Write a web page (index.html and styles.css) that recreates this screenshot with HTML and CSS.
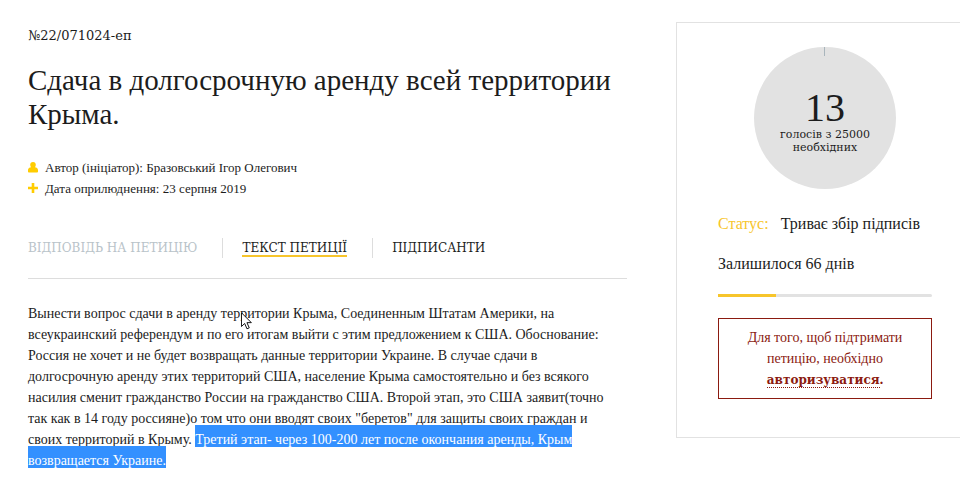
FILE: index.html
```html
<!DOCTYPE html>
<html lang="uk">

<head>
    <meta charset="UTF-8">
    <meta name="viewport" content="width=device-width, initial-scale=1.0">
    <title>Петиція №22/071024-еп</title>
    <link rel="stylesheet" href="styles.css">
</head>

<body>
    <div class="page">
        <main class="petition">
            <div class="number">№22/071024-еп</div>
            <h1>Сдача в долгосрочную аренду всей территории Крыма.</h1>

            <div class="meta">
                <div class="meta-row">
                    <svg class="icon" viewBox="0 0 10 14">
                        <path d="M5 1C6.9 1 7.8 2.2 7.8 3.7C7.8 4.8 7.4 5.7 6.9 6.3C8.9 6.5 10 7.6 10 9.2V10.5C10 11.2 9.5 11.6 8.8 11.6H1.2C.5 11.6 0 11.2 0 10.5V9.2C0 7.6 1.1 6.5 3.1 6.3C2.6 5.7 2.2 4.8 2.2 3.7C2.2 2.2 3.1 1 5 1Z"/>
                    </svg>
                    <span>Автор (ініціатор): Бразовський Ігор Олегович</span>
                </div>
                <div class="meta-row">
                    <svg class="icon" viewBox="0 0 10 14">
                        <path d="M3.7 1H6.3V4.7H10V7.3H6.3V11H3.7V7.3H0V4.7H3.7Z"/>
                    </svg>
                    <span>Дата оприлюднення: 23 серпня 2019</span>
                </div>
            </div>

            <nav class="tabs">
                <span class="tab disabled">ВІДПОВІДЬ НА ПЕТИЦІЮ</span>
                <a class="tab active" href="#text"><span>ТЕКСТ ПЕТИЦІЇ</span></a>
                <a class="tab" href="#signers">ПІДПИСАНТИ</a>
            </nav>

            <p class="text" id="text">
                Вынести вопрос сдачи в аренду территории Крыма, Соединенным Штатам Америки, на<br>
                всеукраинский референдум и по его итогам выйти с этим предложением к США. Обоснование:<br>
                Россия не хочет и не будет возвращать данные территории Украине. В случае сдачи в<br>
                долгосрочную аренду этих территорий США, население Крыма самостоятельно и без всякого<br>
                насилия сменит гражданство России на гражданство США. Второй этап, это США заявит(точно<br>
                так как в 14 году россияне)о том что они вводят своих "беретов" для защиты своих граждан и<br>
                своих территорий в Крыму. <mark>Третий этап- через 100-200 лет после окончания аренды, Крым<br>
                возвращается Украине.</mark>
            </p>
        </main>

        <aside class="card">
            <div class="votes">
                <div class="count">13</div>
                <div>голосів з 25000<br>необхідних</div>
            </div>
            <div class="status"><span class="label">Статус:</span> <span>Триває збір підписів</span></div>
            <div class="days">Залишилося 66 днів</div>
            <div class="bar"><div class="bar-fill" style="width: 27%"></div></div>
            <div class="notice">
                Для того, щоб підтримати<br>петицію, необхідно<br><a href="#login">авторизуватися</a><b>.</b>
            </div>
        </aside>
    </div>

    <svg class="cursor" viewBox="0 0 12 19">
        <path d="M.5 .5V15.5L4 12.2L6.5 18L9 17L6.5 11.3H11.3Z"/>
    </svg>
</body>

</html>
```

FILE: styles.css
```css
* {
    box-sizing: border-box;
}

body {
    margin: 0;
    background: #fff;
    color: #1c1c1c;
    font-family: "Liberation Serif", serif;
    font-size: 14px;
    line-height: 21px;
}

.page {
    display: grid;
    grid-template-columns: minmax(0, 1fr) 284px;
    column-gap: 49px;
    align-items: start;
    padding: 22px 0 18px 28px;
}

.petition {
    padding-top: 3px;
}

.number {
    font-family: "DejaVu Serif", serif;
    font-size: 13px;
}

h1 {
    margin: 17px 0 26px;
    font-size: 29px;
    font-weight: normal;
    line-height: 34px;
}

.meta {
    font-size: 13px;
}

.meta-row {
    display: flex;
    align-items: center;
    gap: 7px;
}

.icon {
    width: 10px;
    height: 14px;
    fill: #fc0;
}

.tabs {
    display: flex;
    align-items: center;
    padding: 39px 0 20px;
    border-bottom: 1px solid #ddd;
    font-family: "DejaVu Serif", serif;
    font-size: 12px;
    line-height: 20px;
}

.tab {
    color: #1c1c1c;
    text-decoration: none;
}

.tab + .tab {
    margin-left: 25px;
    padding-left: 19px;
    border-left: 1px solid #ddd;
}

.tab.disabled {
    color: #b9c3c9;
}

.tab.active span {
    border-bottom: 2px solid #f7c52b;
}

.text {
    margin: 24px 0 0;
    white-space: nowrap;
}

mark {
    padding: 7px 0 0;
    background: #3390ff;
    color: #fff;
}

.card {
    padding: 24px 28px 38px 41px;
    border: 1px solid #e2e2e2;
    border-width: 1px 0 1px 1px;
}

.votes {
    position: relative;
    width: 142px;
    height: 142px;
    margin: 0 auto;
    padding-top: 41px;
    border-radius: 50%;
    background: #e2e2e2;
    font-family: "DejaVu Serif", serif;
    font-size: 11px;
    line-height: 13px;
    text-align: center;
}

.votes::before {
    content: "";
    position: absolute;
    top: 0;
    left: 70px;
    width: 1px;
    height: 9px;
    background: #a9b5bc;
}

.count {
    font-family: "Liberation Serif", serif;
    font-size: 40px;
    line-height: 40px;
}

.status,
.days {
    font-size: 16px;
    line-height: 20px;
}

.status {
    display: flex;
    gap: 12px;
    margin-top: 25px;
}

.label {
    color: #f7c52b;
}

.days {
    margin-top: 20px;
}

.bar {
    height: 3px;
    margin: 20px 0 21px;
    border-radius: 2px;
    background: #e2e2e2;
}

.bar-fill {
    height: 3px;
    background: #f7c52b;
}

.notice {
    padding: 8px 0;
    border: 1px solid #8b1a10;
    color: #8b1a10;
    text-align: center;
}

.notice a {
    border-bottom: 1px dotted #8b1a10;
    color: #8b1a10;
    font-family: "DejaVu Serif", serif;
    font-size: 12px;
    font-weight: bold;
    line-height: 16px;
    text-decoration: none;
}

/* mouse pointer over the text */
.cursor {
    position: absolute;
    top: 312px;
    left: 241px;
    width: 11px;
    height: 18px;
    fill: #fff;
    stroke: #000;
}
```
